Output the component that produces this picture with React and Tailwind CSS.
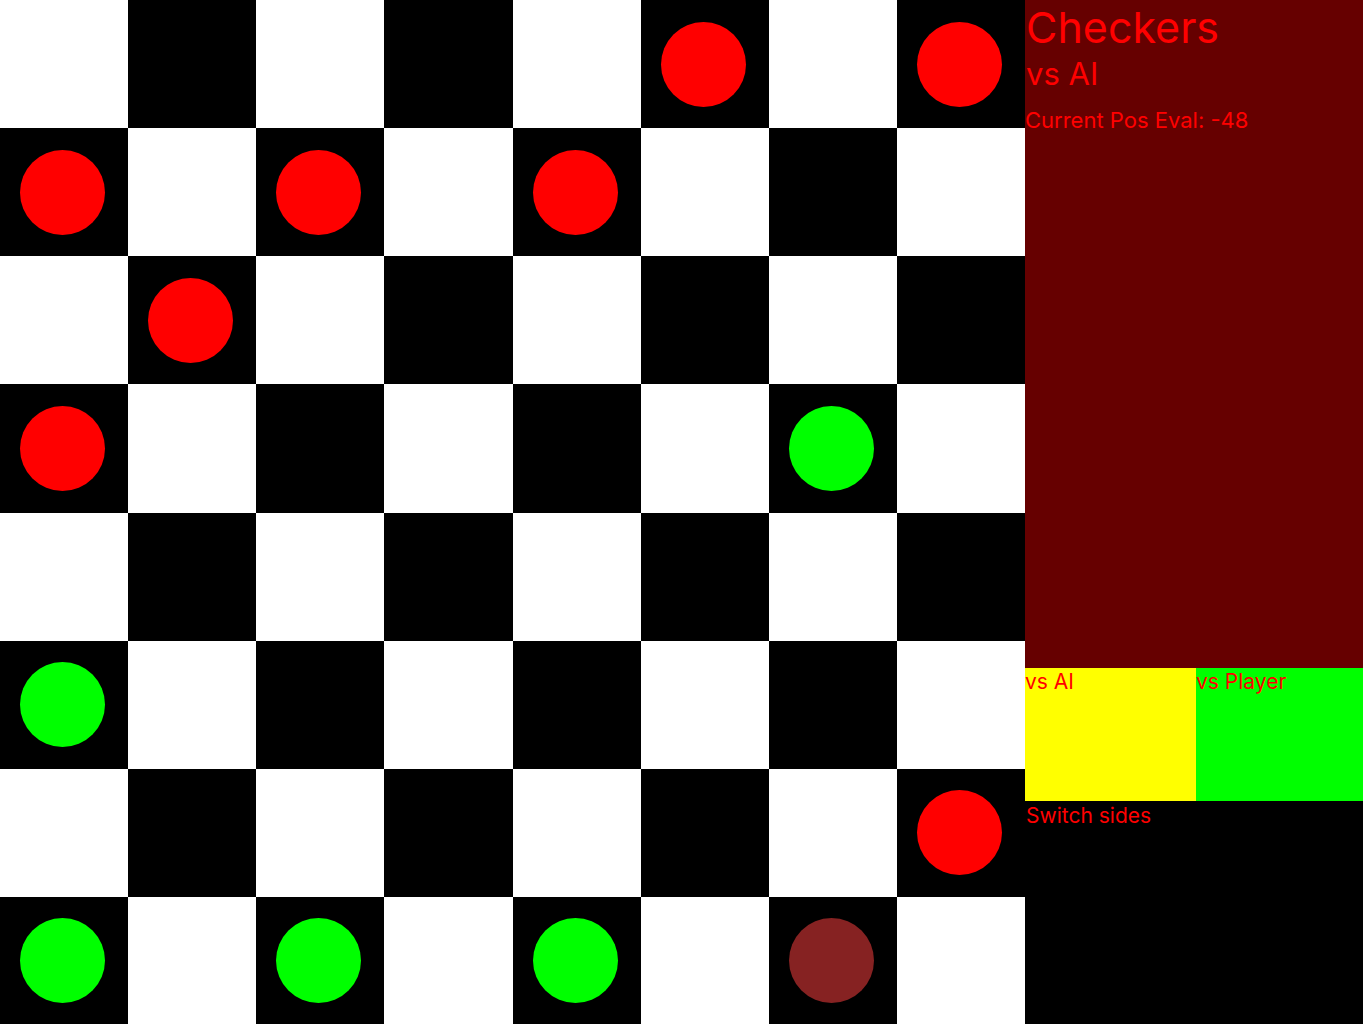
import React from "react";

const pieces = {
  "0-5": "red",
  "0-7": "red",
  "1-0": "red",
  "1-2": "red",
  "1-4": "red",
  "2-1": "red",
  "3-0": "red",
  "3-6": "green",
  "5-0": "green",
  "6-7": "red",
  "7-0": "green",
  "7-2": "green",
  "7-4": "green",
  "7-6": "selected",
};

const pieceColor = {
  red: "bg-[#ff0000]",
  green: "bg-[#00ff00]",
  selected: "bg-[#862222]",
};

const Board = () => {
  const cells = [];
  for (let r = 0; r < 8; r++) {
    for (let c = 0; c < 8; c++) {
      const dark = (r + c) % 2 === 1;
      const p = pieces[`${r}-${c}`];
      cells.push(
        <div
          key={`${r}-${c}`}
          className={`flex items-center justify-center ${dark ? "bg-black" : "bg-white"}`}
        >
          {p && <div className={`w-[85px] h-[85px] rounded-full -ml-[3px] ${pieceColor[p]}`} />}
        </div>
      );
    }
  }
  return (
    <div className="grid grid-cols-8 grid-rows-8 w-[1025px] h-[1025px] shrink-0">{cells}</div>
  );
};

export default function App() {
  return (
    <div
      className="flex w-[1363px] h-[1024px] overflow-hidden bg-black"
      style={{ fontFamily: "Inter, Roboto, sans-serif" }}
    >
      <Board />
      <div className="flex flex-col w-[338px] text-[#ff0000]">
        <div className="h-[668px] bg-[#660000] flex flex-col">
          <div className="text-[43px] leading-[54px] pl-[1px]">Checkers</div>
          <div className="text-[31px] leading-[40px] pl-[1px]">vs AI</div>
          <div className="text-[22px] leading-[28px] mt-[12px]">Current Pos Eval: -48</div>
        </div>
        <div className="flex h-[133px]">
          <div className="w-[171px] bg-[#ffff00] text-[21px] leading-[28px]">vs AI</div>
          <div className="flex-1 bg-[#00ff00] text-[21px] leading-[28px]">vs Player</div>
        </div>
        <div className="text-[21px] leading-[30px] px-[1px]">Switch sides</div>
      </div>
    </div>
  );
}
